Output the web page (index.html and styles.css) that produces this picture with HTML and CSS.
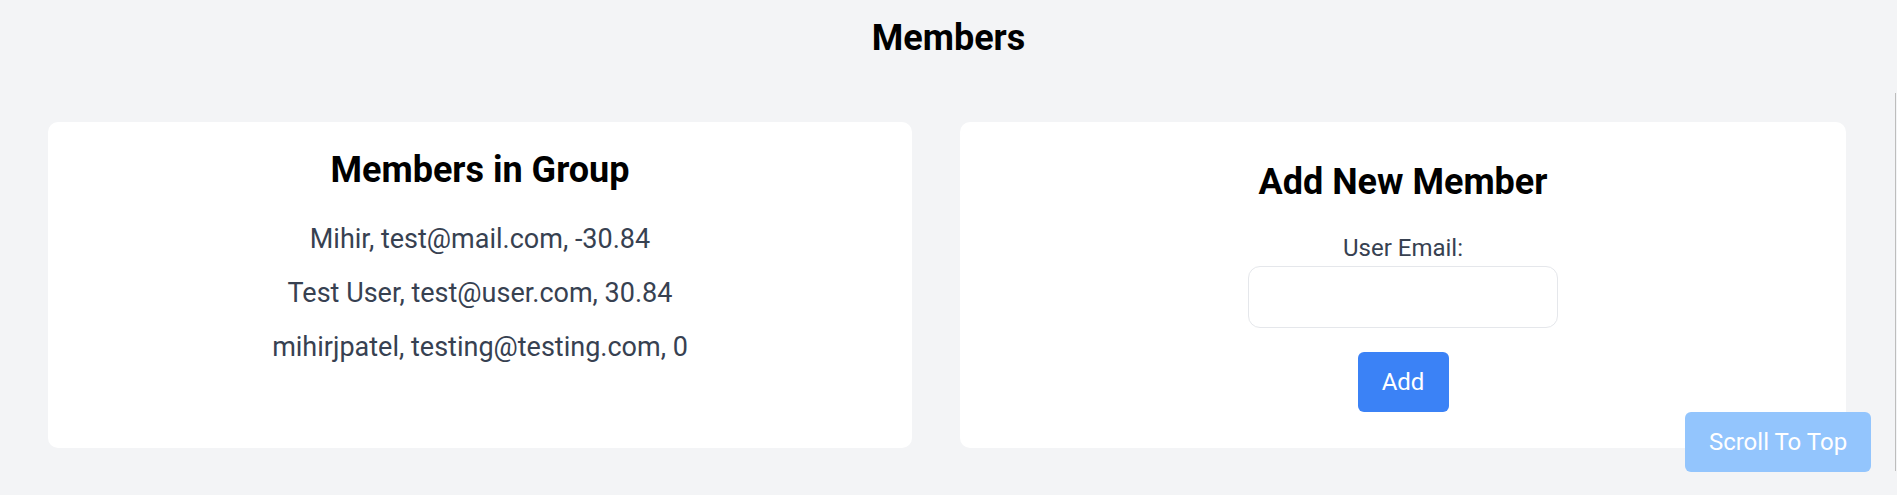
FILE: index.html
```html
<!DOCTYPE html>
<html lang="en">
<head>
<meta charset="utf-8">
<title>Members</title>
<link rel="stylesheet" href="styles.css">
</head>
<body>
<div class="page">
  <h1 class="title">Members</h1>
  <div class="cards">
    <section class="card card-list">
      <h2 class="card-title">Members in Group</h2>
      <p class="member">Mihir, test@mail.com, -30.84</p>
      <p class="member">Test User, test@user.com, 30.84</p>
      <p class="member">mihirjpatel, testing@testing.com, 0</p>
    </section>
    <section class="card card-form">
      <h2 class="card-title">Add New Member</h2>
      <form class="form">
        <label class="label" for="email">User Email:</label>
        <input class="input" id="email" type="email">
        <button class="btn" type="button">Add</button>
      </form>
    </section>
  </div>
</div>
<button class="scroll-top" type="button">Scroll To Top</button>
<div class="edge-line"></div>
</body>
</html>
```
FILE: styles.css
```css
* { box-sizing: border-box; }
html, body { margin: 0; padding: 0; }
body {
  background: #f3f4f6;
  font-family: Roboto, "Liberation Sans", Arial, sans-serif;
  color: #374151;
  height: 495px;
  overflow: hidden;
}
.page { padding-top: 14px; }
.title {
  margin: 0;
  text-align: center;
  font-size: 36px;
  line-height: 48px;
  font-weight: 700;
  color: #000;
}
.cards {
  display: grid;
  grid-template-columns: 864px 886px;
  gap: 48px;
  padding: 0 48px;
  margin-top: 60px;
  align-items: stretch;
}
.card {
  background: #fff;
  border-radius: 10px;
  text-align: center;
  min-height: 326px;
}
.card-list { padding: 24px; }
.card-form { padding: 36px; }
.card-title {
  margin: 0 0 24px;
  font-size: 36px;
  line-height: 48px;
  font-weight: 700;
  color: #000;
}
.member {
  margin: 0 0 12px;
  font-size: 27px;
  line-height: 42px;
}
.form {
  display: flex;
  flex-direction: column;
  align-items: center;
}
.label {
  display: block;
  font-size: 24px;
  line-height: 36px;
}
.input {
  width: 310px;
  height: 62px;
  border: 1.5px solid #e5e7eb;
  border-radius: 12px;
  background: #fff;
  margin: 0 0 24px;
  font: inherit;
  font-size: 24px;
  padding: 12px;
  outline: none;
}
.btn {
  width: 91px;
  height: 60px;
  border: none;
  border-radius: 6px;
  background: #3b82f6;
  color: #fff;
  font-family: inherit;
  font-size: 24px;
  line-height: 36px;
  padding: 0;
}
.scroll-top {
  position: fixed;
  right: 26px;
  bottom: 23px;
  width: 186px;
  height: 60px;
  border: none;
  border-radius: 6px;
  background: #93c5fd;
  color: #fff;
  font-family: Roboto, "Liberation Sans", Arial, sans-serif;
  font-size: 24px;
  padding: 0;
}
.edge-line {
  position: fixed;
  right: 1px;
  top: 93px;
  width: 1px;
  height: 378px;
  background: #bdbdbd;
}
```
